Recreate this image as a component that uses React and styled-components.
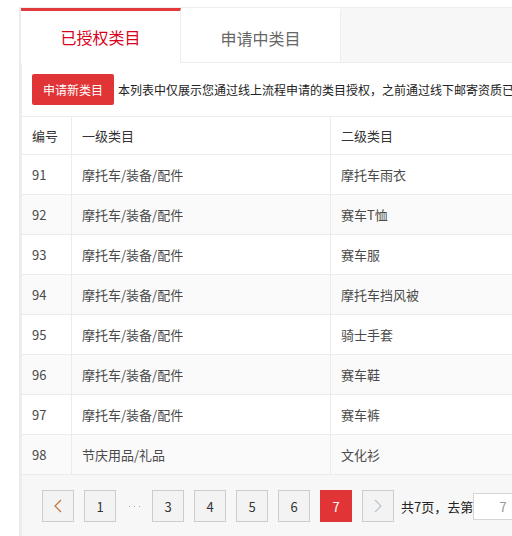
import React from 'react';
import styled, { createGlobalStyle } from 'styled-components';

const GlobalStyle = createGlobalStyle`
    html, body {
        margin: 0;
        padding: 0;
        background: #fff;
        overflow: hidden;
        font-family: "Noto Sans CJK SC", "Noto Sans", sans-serif;
    }
`;

const StyledPage = styled.div`
    margin: 7px 0 0 19px;
    width: 620px;
    border-left: 2px solid #ececec;
    border-top: 1px solid #eeeeee;
`;

const StyledTabs = styled.div`
    display: flex;
    height: 55px;
`;

const StyledTab = styled.div`
    width: 160px;
    box-sizing: border-box;
    display: flex;
    align-items: center;
    justify-content: center;
    font-size: 16px;
    background: #fff;
    color: ${props => props.active ? '#d9001b' : '#666'};
    border-top: 3px solid ${props => props.active ? '#e2393b' : 'transparent'};
    border-right: 1px solid #eeeeee;
    border-bottom: 1px solid ${props => props.active ? '#fff' : '#ececec'};
    padding-top: ${props => props.active ? '0' : '2px'};
`;

const StyledTabRest = styled.div`
    flex: 1;
    background: #f7f7f7;
    border-bottom: 1px solid #ececec;
`;

const StyledContent = styled.div`
    border-left: 1px solid #eeeeee;
    background: #fff;
`;

const StyledToolbar = styled.div`
    display: flex;
    align-items: center;
    gap: 4px;
    padding: 11px 0 11px 10px;
    white-space: nowrap;
    font-size: 12px;
    color: #222;
`;

const StyledButton = styled.button`
    height: 31px;
    padding: 0 11px;
    border: none;
    border-radius: 2px;
    background: #e03436;
    color: #fff;
    font-family: inherit;
    font-size: 12px;
`;

const StyledTable = styled.table`
    width: 100%;
    border-collapse: collapse;
    font-size: 13px;
    color: #4a4a4a;
    text-align: left;
`;

const StyledTh = styled.th`
    height: 37px;
    padding: 0 10px;
    font-weight: normal;
    color: #333;
    border: 1px solid #ececec;
    border-left: none;
    width: ${props => props.w || 'auto'};
`;

const StyledRow = styled.tr`
    background: ${props => props.odd ? '#fafafa' : '#fff'};
`;

const StyledTd = styled.td`
    height: 39px;
    padding: 0 10px;
    border: 1px solid #ececec;
    border-left: none;
`;

const StyledPager = styled.div`
    display: flex;
    align-items: center;
    gap: 10px;
    background: #f7f7f7;
    padding: 15px 20px 14px;
    font-size: 13px;
    color: #222;
`;

const StyledPageBtn = styled.div`
    width: 32px;
    height: 32px;
    box-sizing: border-box;
    display: flex;
    align-items: center;
    justify-content: center;
    border: 1px solid ${props => props.current ? '#e03436' : '#cccccc'};
    background: ${props => props.current ? '#e03436' : '#f3f3f3'};
    color: ${props => props.current ? '#fff' : '#333'};
    font-size: 13px;
`;

const StyledDots = styled.span`
    width: 16px;
    display: flex;
    justify-content: center;
    gap: 4px;
`;

const StyledDot = styled.i`
    width: 1px;
    height: 1px;
    background: #aaa;
`;

const StyledJump = styled.div`
    display: flex;
    align-items: center;
    margin-left: -3px;
    white-space: nowrap;
`;

const StyledInput = styled.div`
    width: 60px;
    height: 27px;
    box-sizing: border-box;
    border: 1px solid #d6d6d6;
    background: #fff;
    color: #999;
    display: flex;
    align-items: center;
    justify-content: center;
`;

const rows = [
    ['91', '摩托车/装备/配件', '摩托车雨衣'],
    ['92', '摩托车/装备/配件', '赛车T恤'],
    ['93', '摩托车/装备/配件', '赛车服'],
    ['94', '摩托车/装备/配件', '摩托车挡风被'],
    ['95', '摩托车/装备/配件', '骑士手套'],
    ['96', '摩托车/装备/配件', '赛车鞋'],
    ['97', '摩托车/装备/配件', '赛车裤'],
    ['98', '节庆用品/礼品', '文化衫'],
];

const Arrow = ({ dir, color }) => (
    <svg width="10" height="14" viewBox="0 0 10 14">
        <path
            d={dir === 'left' ? 'M8 1 L2 7 L8 13' : 'M2 1 L8 7 L2 13'}
            fill="none"
            stroke={color}
            strokeWidth="1.2"
        />
    </svg>
);

const App = () => {
    return (
        <>
            <GlobalStyle />
            <StyledPage>
                <StyledTabs>
                    <StyledTab active>已授权类目</StyledTab>
                    <StyledTab>申请中类目</StyledTab>
                    <StyledTabRest />
                </StyledTabs>
                <StyledContent>
                    <StyledToolbar>
                        <StyledButton>申请新类目</StyledButton>
                        <span>本列表中仅展示您通过线上流程申请的类目授权，之前通过线下邮寄资质已获得的类目授权不在此列表中展示</span>
                    </StyledToolbar>
                    <StyledTable>
                        <thead>
                            <tr>
                                <StyledTh w="29px">编号</StyledTh>
                                <StyledTh w="238px">一级类目</StyledTh>
                                <StyledTh>二级类目</StyledTh>
                            </tr>
                        </thead>
                        <tbody>
                            {rows.map((row, index) => (
                                <StyledRow key={row[0]} odd={index % 2 === 1}>
                                    {row.map((cell, i) => (
                                        <StyledTd key={i}>{cell}</StyledTd>
                                    ))}
                                </StyledRow>
                            ))}
                        </tbody>
                    </StyledTable>
                    <StyledPager>
                        <StyledPageBtn><Arrow dir="left" color="#c0703a" /></StyledPageBtn>
                        <StyledPageBtn>1</StyledPageBtn>
                        <StyledDots><StyledDot /><StyledDot /><StyledDot /></StyledDots>
                        <StyledPageBtn>3</StyledPageBtn>
                        <StyledPageBtn>4</StyledPageBtn>
                        <StyledPageBtn>5</StyledPageBtn>
                        <StyledPageBtn>6</StyledPageBtn>
                        <StyledPageBtn current>7</StyledPageBtn>
                        <StyledPageBtn><Arrow dir="right" color="#b8c4d0" /></StyledPageBtn>
                        <StyledJump>
                            共7页，去第
                            <StyledInput>7</StyledInput>
                        </StyledJump>
                    </StyledPager>
                </StyledContent>
            </StyledPage>
        </>
    );
}

export default App;
